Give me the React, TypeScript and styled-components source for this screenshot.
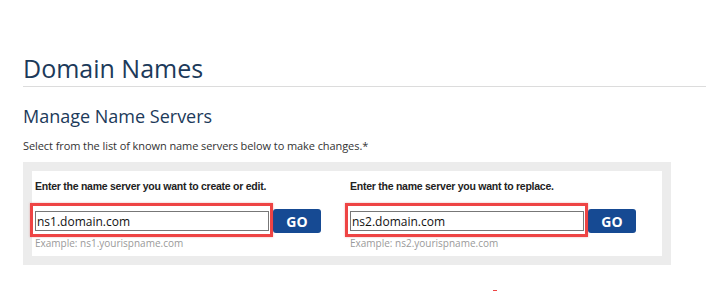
import styled, { createGlobalStyle } from "styled-components";

const GlobalStyle = createGlobalStyle`
  body {
    margin: 0;
    background: #fff;
    font-family: "Open Sans", sans-serif;
  }
`;

const Page = styled.div`
  padding: 51px 0 0 23px;
  position: relative;
  height: 303px;
  box-sizing: border-box;
`;

const Title = styled.h1`
  margin: 0;
  font-size: 25px;
  font-weight: 400;
  line-height: 35px;
  color: #1c3a5a;
  border-bottom: 1px solid #dcdcdc;
`;

const SubTitle = styled.h2`
  margin: 17px 0 0;
  font-size: 18px;
  font-weight: 400;
  line-height: normal;
  color: #1c3a5a;
`;

const Intro = styled.p`
  margin: 10px 0 0;
  font-size: 11px;
  letter-spacing: -0.08px;
  line-height: 16px;
  color: #333;
`;

const Panel = styled.div`
  margin-top: 8px;
  width: 648px;
  box-sizing: border-box;
  padding: 9px;
  background: #ececec;
`;

const Inner = styled.div`
  background: #fff;
  display: grid;
  grid-template-columns: 1fr 1fr;
  height: 85px;
`;

const Column = styled.div`
  padding: 9px 0 0 3px;
`;

const Label = styled.div`
  font-family: "Liberation Sans", Arial, sans-serif;
  font-weight: 700;
  font-size: 10.5px;
  letter-spacing: -0.25px;
  line-height: 13px;
  color: #222;
`;

const Row = styled.div`
  display: flex;
  align-items: center;
  margin-top: 16px;
`;

const Field = styled.div`
  position: relative;
  width: 234px;
`;

const Highlight = styled.span`
  position: absolute;
  top: -8px;
  bottom: -6px;
  left: -5px;
  right: -4px;
  border: 3px solid #ee4444;
  box-shadow: 0 0 2px rgba(200, 40, 40, 0.35);
  pointer-events: none;
`;

const Input = styled.input`
  display: block;
  width: 100%;
  height: 20px;
  box-sizing: border-box;
  border: 1px solid #777;
  padding: 0 1px;
  font-family: "Open Sans", sans-serif;
  font-size: 12px;
  color: #111;
  outline: none;
`;

const GoButton = styled.button`
  margin-left: 4px;
  width: 48px;
  height: 24px;
  border: none;
  border-radius: 3px;
  background: #164a93;
  color: #fff;
  font-family: "Open Sans", sans-serif;
  font-weight: 700;
  font-size: 14px;
  padding: 0;
  cursor: pointer;
`;

const Hint = styled.div`
  margin-top: 3px;
  font-size: 10px;
  line-height: 14px;
  color: #9a9a9a;
`;

const Mark = styled.span`
  position: absolute;
  left: 493px;
  top: 290px;
  width: 4px;
  height: 1px;
  background: #ee4444;
`;

type NsProps = {
  label: string;
  value: string;
  hint: string;
};

const NameServerField = ({ label, value, hint }: NsProps) => (
  <Column>
    <Label>{label}</Label>
    <Row>
      <Field>
        <Input defaultValue={value} />
        <Highlight />
      </Field>
      <GoButton>GO</GoButton>
    </Row>
    <Hint>{hint}</Hint>
  </Column>
);

const App = () => {
  return (
    <>
      <GlobalStyle />
      <Page>
        <Title>Domain Names</Title>
        <SubTitle>Manage Name Servers</SubTitle>
        <Intro>Select from the list of known name servers below to make changes.*</Intro>
        <Panel>
          <Inner>
            <NameServerField
              label="Enter the name server you want to create or edit."
              value="ns1.domain.com"
              hint="Example: ns1.yourispname.com"
            />
            <NameServerField
              label="Enter the name server you want to replace."
              value="ns2.domain.com"
              hint="Example: ns2.yourispname.com"
            />
          </Inner>
        </Panel>
        <Mark />
      </Page>
    </>
  );
};

export default App;
